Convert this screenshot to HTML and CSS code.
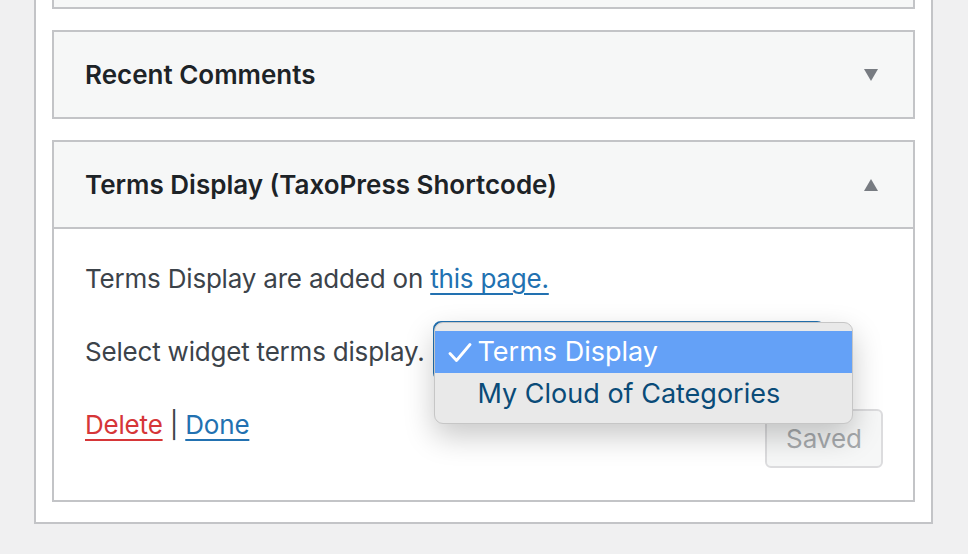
FILE: index.html
```html
<!DOCTYPE html>
<html lang="en">
<head>
    <meta charset="UTF-8">
    <meta name="viewport" content="width=device-width, initial-scale=1.0">
    <title>Widgets</title>
    <link rel="stylesheet" href="styles.css">
</head>
<body>
    <div class="sidebar">
        <div class="widget widget-stub"></div>

        <div class="widget">
            <div class="widget-top">
                <h3>Recent Comments</h3>
                <span class="toggle toggle-down"></span>
            </div>
        </div>

        <div class="widget">
            <div class="widget-top widget-top-open">
                <h3>Terms Display (TaxoPress Shortcode)</h3>
                <span class="toggle toggle-up"></span>
            </div>
            <div class="widget-inside">
                <p class="intro">Terms Display are added on <a href="#">this page.</a></p>

                <div class="select-row">
                    <label>Select widget terms display.</label>
                    <div class="fake-select">
                        <div class="dropdown">
                            <div class="option option-selected">
                                <svg class="check" width="24" height="20" viewBox="0 0 24 20">
                                    <path d="M2 10.5 L8.5 17.5 L22 1.5" fill="none" stroke="#fff" stroke-width="2.8" stroke-linecap="round" stroke-linejoin="round"/>
                                </svg>Terms Display</div>
                            <div class="option">My Cloud of Categories</div>
                        </div>
                    </div>
                </div>

                <div class="actions">
                    <div class="links">
                        <a href="#" class="delete">Delete</a> | <a href="#">Done</a>
                    </div>
                    <button class="saved" disabled>Saved</button>
                </div>
            </div>
        </div>
    </div>
</body>
</html>
```

FILE: styles.css
```css
body {
    margin: 0;
    background-color: #f0f0f1;
    font-family: Inter, "Noto Sans", sans-serif;
    color: #3c434a;
}

/* il pannello bianco della sidebar */
.sidebar {
    margin-left: 34px;
    width: 863px;
    background-color: #fff;
    border: 2px solid #c3c4c7;
    border-top: none;
    padding: 0 16px 20px 16px;
}

.widget {
    border: 2px solid #c3c4c7;
    background-color: #f6f7f7;
    margin-top: 21px;
}

.widget-stub {
    margin-top: 0;
    height: 7px;
    border-top: none;
}

.widget-top {
    display: flex;
    align-items: center;
    justify-content: space-between;
    height: 85px;
    padding: 0 30px 0 31px;
}

.widget-top-open {
    border-bottom: 2px solid #c3c4c7;
}

.widget-top h3 {
    margin: 0;
    font-size: 26px;
    font-weight: 600;
    color: #1d2327;
}

.toggle {
    width: 0;
    height: 0;
    border-left: 7.5px solid transparent;
    border-right: 7.5px solid transparent;
    margin-right: 5px;
}

.toggle-down {
    border-top: 12px solid #787c82;
}

.toggle-up {
    border-bottom: 12px solid #787c82;
}

.widget-inside {
    background-color: #fff;
    padding: 30px 30px 32px 31px;
    font-size: 26px;
    line-height: 39px;
    letter-spacing: -0.2px;
}

.intro {
    margin: 0;
}

a {
    color: #2271b1;
    text-decoration-thickness: 2px;
    text-underline-offset: 5px;
}

.select-row {
    display: flex;
    align-items: center;
    margin-top: 23px;
    height: 60px;
}

.fake-select {
    position: relative;
    margin-left: 8px;
    width: 388px;
    height: 56px;
    border: 2px solid #2271b1;
    border-radius: 8px;
    background-color: #fff;
}

/* il menu nativo aperto sopra la select */
.dropdown {
    position: absolute;
    left: -1px;
    top: -1px;
    width: 417px;
    padding: 8px 0;
    background-color: #e9e9e9;
    border: 1px solid #c6c6c6;
    border-radius: 9px;
    box-shadow: 0 12px 30px rgba(0, 0, 0, 0.22);
    overflow: hidden;
    z-index: 2;
    letter-spacing: 0;
}

.option {
    height: 42px;
    line-height: 42px;
    padding-left: 43px;
    font-size: 27px;
    color: #0a4b78;
    position: relative;
}

.option-selected {
    background-color: #64a1f7;
    color: #fff;
}

.check {
    position: absolute;
    left: 13px;
    top: 12px;
}

.actions {
    display: flex;
    justify-content: space-between;
    align-items: flex-start;
    margin-top: 24px;
}

.delete {
    color: #d63638;
}

.saved {
    margin-top: 4px;
    width: 118px;
    height: 59px;
    border: 2px solid #dcdcde;
    border-radius: 6px;
    background-color: #f6f7f7;
    color: #a7aaad;
    font-family: inherit;
    font-size: 26px;
}
```
